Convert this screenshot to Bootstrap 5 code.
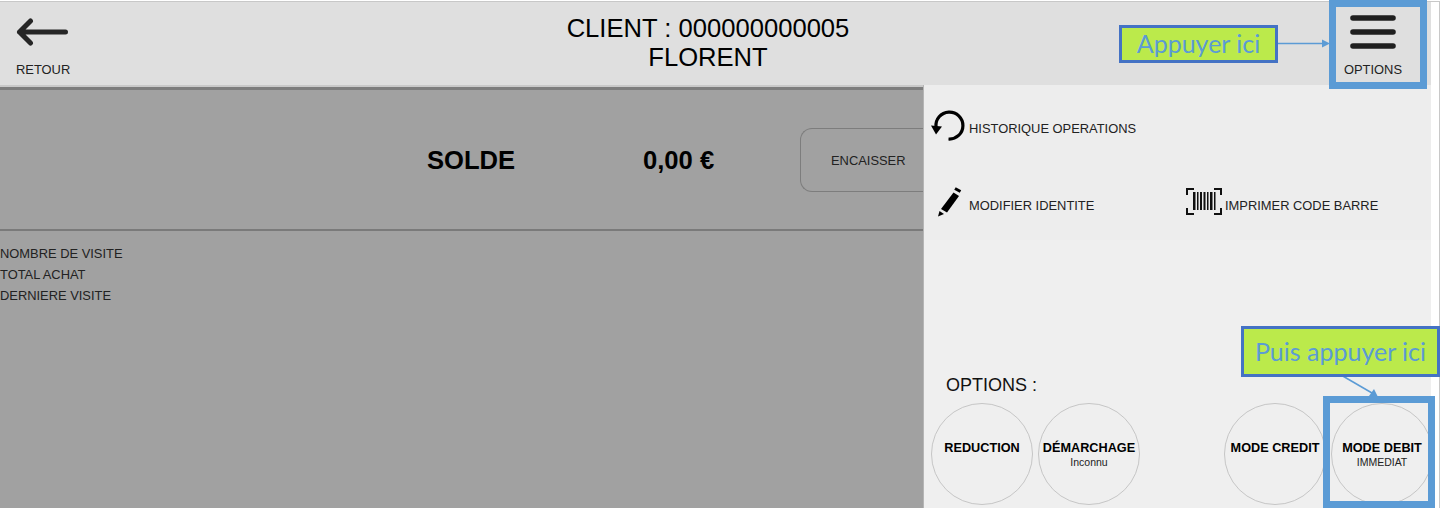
<!DOCTYPE html>
<html lang="fr">
<head>
<meta charset="utf-8">
<title>Client</title>
<link href="https://cdn.jsdelivr.net/npm/bootstrap@5.3.0/dist/css/bootstrap.min.css" rel="stylesheet">
<style>
html,body{height:508px;overflow:hidden;background:#fff;font-family:"Liberation Sans",Arial,sans-serif;color:#222}
.shot{position:relative;width:1440px;height:507px;margin-top:1px;border-top:1px solid #c8c8c8;border-right:1px solid #c8c8c8}
.shell{width:1431px;height:506px}
.topbar{height:83px;background:#dfdfdf;flex:none}
.top-btn{font-size:12.9px;line-height:15px}
.back-btn{width:108px;padding:15px 0 0 16px}
.menu-btn{width:84px;margin-right:16px;text-align:center;padding-top:13px}
.menu-btn svg,.back-btn svg{display:block}
.menu-btn svg{margin:0 auto}
.top-label{display:block}
.back-btn .top-label{margin-top:15px}
.menu-btn .top-label{margin-top:13px}
.client{font-size:25.6px;line-height:29px;color:#000;padding-top:12px;text-align:center;flex:1;margin-right:23px}
.below{flex:1;min-height:0}
.leftpane{width:923px;flex:none;background:#a1a1a1;border-top:2px solid #c9c9c9;box-shadow:inset 0 3px 0 #7d7d7d}
.balance{height:144px;border-bottom:2px solid #7a7a7a;padding-top:3px}
.solde-lbl{font-size:25.6px;font-weight:700;color:#000;width:216px;margin-left:427px;padding-top:2px}
.solde-val{font-size:25.6px;font-weight:700;color:#000;width:157px;padding-top:2px}
.pay-btn{width:123px;height:64px;border:1px solid #7d7d7d;border-right:0;border-radius:12px 0 0 12px;font-size:12.9px;color:#222;background:transparent;padding:2px 0 0 30px;text-align:left}
.stats{font-size:12.9px;line-height:21px;padding-top:12px;color:#222}
.sidepane{width:508px;background:#efefef;border-left:1px solid #b5b5b5;flex:none}
.actions{height:155px;padding-top:1px;background:#ededed;font-size:12.9px}
.act-row{height:77px;align-items:center}
.act-row svg{flex:none}
.act-row span{padding-top:8px}
.act-a{padding-left:7px;width:262px;gap:4px}
.act-b{gap:3px}
.opt-title{font-size:18px;line-height:20px;color:#111;padding:135px 0 0 22px}
.rounds{padding:8px 0 0 7px;gap:5px}
.round{width:102px;height:102px;flex:none;border:1px solid #c6c6c6;border-radius:50%;text-align:center;padding-top:37px;color:#000;font-size:12.7px;font-weight:700;line-height:15px}
.round small{display:block;font-size:10.5px;font-weight:400;line-height:13px;color:#222}
.round-gap{margin-left:79px}
.frame{position:absolute;border:7px solid #5b9bd5;pointer-events:none}
.frame-top{left:1329px;top:-2px;width:98px;height:89px}
.frame-bot{left:1323px;top:394px;width:112px;height:112px}
.callout{position:absolute;background:#bbea4b;border:3px solid #4472c4;color:#5b9bd5;font-family:Lato,"Open Sans",sans-serif;display:flex;align-items:center;justify-content:center;white-space:nowrap}
.call-one{left:1119px;top:23px;width:159px;height:38px;font-size:25px}
.call-two{left:1241px;top:324px;width:199px;height:51px;font-size:25px}
.arrows{position:absolute;left:0;top:-2px}
</style>
</head>
<body>
<div class="shot">
  <div class="shell d-flex flex-column">
    <div class="topbar d-flex">
      <div class="top-btn back-btn">
        <svg width="54" height="30" viewBox="0 0 54 30"><path d="M3.500 15H49.500M14.500 4 3.500 15 14.500 26" fill="none" stroke="#262626" stroke-width="5" stroke-linecap="round" stroke-linejoin="round"/></svg>
        <span class="top-label">RETOUR</span>
      </div>
      <div class="client">CLIENT : 000000000005<br>FLORENT</div>
      <div class="top-btn menu-btn">
        <svg width="46" height="34" viewBox="0 0 46 34"><path d="M3 3H43M3 17H43M3 31H43" fill="none" stroke="#1f1f1f" stroke-width="5.600" stroke-linecap="round"/></svg>
        <span class="top-label">OPTIONS</span>
      </div>
    </div>
    <div class="below d-flex">
      <div class="leftpane">
        <div class="balance d-flex align-items-center">
          <div class="solde-lbl">SOLDE</div>
          <div class="solde-val">0,00 €</div>
          <button type="button" class="pay-btn">ENCAISSER</button>
        </div>
        <div class="stats"><div>NOMBRE DE VISITE</div><div>TOTAL ACHAT</div><div>DERNIERE VISITE</div></div>
      </div>
      <div class="sidepane">
        <div class="actions">
          <div class="act-row d-flex"><div class="act-a d-flex align-items-center">
            <svg width="34" height="34" viewBox="0 0 34 34"><path d="M5 19A13.500 13.500 0 1 1 17.500 31" fill="none" stroke="#000" stroke-width="3.200"/><path d="M0 17.500 11 18.500 5 26.500Z" fill="#000"/></svg>
            <span>HISTORIQUE OPERATIONS</span></div></div>
          <div class="act-row d-flex">
            <div class="act-a d-flex align-items-center">
              <svg width="34" height="30" viewBox="0 0 34 30"><path d="M7 29.500 8.500 24 13 27Z" fill="#000"/><path d="M10 22 16 25.500 28 9 22.500 5.500Z" fill="#000"/><path d="M24 1.500 29.500 4.500" stroke="#000" stroke-width="3"/></svg>
              <span>MODIFIER IDENTITE</span>
            </div>
            <div class="act-b d-flex align-items-center">
              <svg width="36" height="27" viewBox="0 0 36 27"><path d="M1 7V1H8M28 1H35V7M1 20V26H8M28 26H35V20" fill="none" stroke="#111" stroke-width="2"/><path d="M7 4H9.500V22H7ZM11 4H12.500V22H11ZM14 4H16V22H14ZM17.500 4H19.500V22H17.500ZM21 4H22.500V22H21ZM24 4H26.500V22H24ZM28 4H29.500V22H28Z" fill="#111"/></svg>
              <span>IMPRIMER CODE BARRE</span>
            </div>
          </div>
        </div>
        <div class="opt-title">OPTIONS :</div>
        <div class="rounds d-flex">
          <div class="round">REDUCTION</div>
          <div class="round">DÉMARCHAGE<small>Inconnu</small></div>
          <div class="round round-gap">MODE CREDIT</div>
          <div class="round">MODE DEBIT<small>IMMEDIAT</small></div>
        </div>
      </div>
    </div>
  </div>
  <svg class="arrows" width="1441" height="508" viewBox="0 0 1441 508">
    <path d="M1278 43.500H1323" stroke="#5b9bd5" stroke-width="1.500" fill="none"/><path d="M1322 39.500 1330 43.500 1322 47.500Z" fill="#5b9bd5"/>
    <path d="M1341 375 1372 393" stroke="#5b9bd5" stroke-width="1.500" fill="none"/><path d="M1374 389 1378 397 1369 396Z" fill="#5b9bd5"/>
  </svg>
  <div class="frame frame-top"></div>
  <div class="frame frame-bot"></div>
  <div class="callout call-one">Appuyer ici</div>
  <div class="callout call-two">Puis appuyer ici</div>
</div>
<script src="https://cdn.jsdelivr.net/npm/bootstrap@5.3.0/dist/js/bootstrap.bundle.min.js"></script>
</body>
</html>
